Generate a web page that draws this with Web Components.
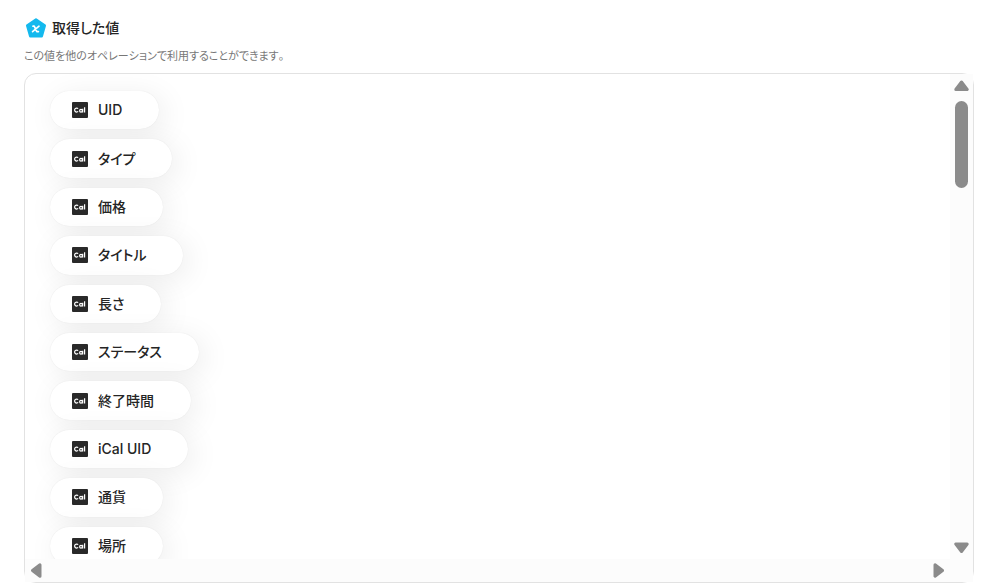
<!DOCTYPE html>
<html lang="ja">
<head>
<meta charset="utf-8">
<meta name="viewport" content="width=device-width, initial-scale=1">
<title>取得した値</title>
<style>
  body {
    margin: 0;
    background: #fff;
    color: #252525;
    font-family: Inter, "Noto Sans CJK JP", sans-serif;
    font-feature-settings: "palt";
    font-kerning: none;
  }
</style>
</head>
<body>
<output-values>
  <section-heading slot="heading">
    取得した値
    <span slot="note">この値を他のオペレーションで利用することができます。</span>
  </section-heading>
  <scroll-panel>
    <value-list>
      <value-pill>UID</value-pill>
      <value-pill>タイプ</value-pill>
      <value-pill>価格</value-pill>
      <value-pill>タイトル</value-pill>
      <value-pill>長さ</value-pill>
      <value-pill>ステータス</value-pill>
      <value-pill>終了時間</value-pill>
      <value-pill>iCal UID</value-pill>
      <value-pill>通貨</value-pill>
      <value-pill>場所</value-pill>
    </value-list>
  </scroll-panel>
</output-values>
<script>
  const define = (name, html) => {
    const template = document.createElement('template');
    template.innerHTML = html;
    customElements.define(name, class extends HTMLElement {
      constructor() {
        super();
        this.attachShadow({ mode: 'open' }).append(template.content.cloneNode(true));
      }
    });
  };

  define('output-values', `
    <style>
      :host {
        display: flex;
        flex-direction: column;
        gap: 8px;
        box-sizing: border-box;
        height: 100vh;
        padding: 18px 28px 4px 24px;
      }
      ::slotted(scroll-panel) { flex: 1; min-height: 0; }
    </style>
    <slot name="heading"></slot>
    <slot></slot>`);

  define('section-heading', `
    <style>
      :host { display: block; }
      h2 {
        display: flex;
        align-items: center;
        gap: 4px;
        margin: 0 0 10px;
        font-size: 14px;
        font-weight: 500;
        line-height: 20px;
      }
      svg { width: 24px; height: 24px; margin: -2px 0; }
      p { margin: 0; font-size: 11px; line-height: 17px; color: #777; }
    </style>
    <h2>
      <svg viewBox="0 0 24 24" aria-hidden="true">
        <path d="M12 3.4 20.8 9.6 17.8 20.3H6.2L3.2 9.6Z" fill="#14b9ee" stroke="#14b9ee" stroke-width="2.4" stroke-linejoin="round"/>
        <path d="M9 10.2h1.2l2.6 5.4h1.6M15 10.2 8.6 15.6" fill="none" stroke="#fff" stroke-width="1.7" stroke-linecap="round" stroke-linejoin="round"/>
      </svg>
      <span><slot></slot></span>
    </h2>
    <p><slot name="note"></slot></p>`);

  define('scroll-panel', `
    <style>
      :host {
        display: grid;
        grid-template: minmax(0, 1fr) 23px / minmax(0, 1fr) 23px;
        border: 1px solid #e2e2e2;
        border-radius: 12px;
      }
      .view { overflow: hidden; border-top-left-radius: 11px; }
      .bar { display: flex; align-items: center; justify-content: space-between; background: #fcfcfc; }
      .vertical { flex-direction: column; padding: 4px 0; }
      .horizontal { padding: 0 4px; }
      .corner { background: #fcfcfc; }
      .thumb { width: 13px; height: 87px; margin: 8px 0 auto; border-radius: 7px; background: #8b8b8b; }
      button { display: flex; padding: 0; border: 0; background: none; }
      svg { width: 15px; height: 15px; fill: #8b8b8b; stroke: #8b8b8b; stroke-width: 3; stroke-linejoin: round; }
      .down svg { transform: rotate(180deg); }
      .left svg { transform: rotate(-90deg); }
      .right svg { transform: rotate(90deg); }
    </style>
    <div class="view"><slot></slot></div>
    <div class="bar vertical">
      <button class="up" type="button" aria-label="上へ"><svg viewBox="0 0 15 15"><path d="M7.5 4 13.2 11.5H1.8Z"/></svg></button>
      <div class="thumb"></div>
      <button class="down" type="button" aria-label="下へ"><svg viewBox="0 0 15 15"><path d="M7.5 3.5 13.2 11H1.8Z"/></svg></button>
    </div>
    <div class="bar horizontal">
      <button class="left" type="button" aria-label="左へ"><svg viewBox="0 0 15 15"><path d="M7.5 3.5 13.2 11H1.8Z"/></svg></button>
      <button class="right" type="button" aria-label="右へ"><svg viewBox="0 0 15 15"><path d="M7.5 3.5 13.2 11H1.8Z"/></svg></button>
    </div>
    <div class="corner"></div>`);

  define('value-list', `
    <style>
      :host {
        display: grid;
        grid-auto-rows: 1fr;
        gap: 10px;
        justify-items: start;
        min-height: 474px;
        padding: 17px 25px;
      }
    </style>
    <slot></slot>`);

  define('value-pill', `
    <style>
      :host {
        display: flex;
        align-items: center;
        gap: 10px;
        box-sizing: border-box;
        padding: 0 37px 0 22px;
        border-radius: 20px;
        background: #fff;
        box-shadow: 0 0 1px rgba(0, 0, 0, .1), 5px 5px 30px rgba(0, 0, 0, .08);
        font-size: 14px;
        font-weight: 500;
        line-height: 20px;
        white-space: nowrap;
      }
      svg { width: 16px; height: 16px; }
    </style>
    <svg viewBox="0 0 16 16" aria-hidden="true">
      <rect width="16" height="16" rx="1" fill="#292929"/>
      <g fill="none" stroke="#fff" stroke-width="1.2">
        <path d="M6.1 6.7A2 2 0 1 0 6.1 9.4"/>
        <circle cx="9" cy="8.7" r="1.4"/>
        <path d="M10.7 6.8v3.7M12.6 5.3v5.2"/>
      </g>
    </svg>
    <span><slot></slot></span>`);
</script>
</body>
</html>
